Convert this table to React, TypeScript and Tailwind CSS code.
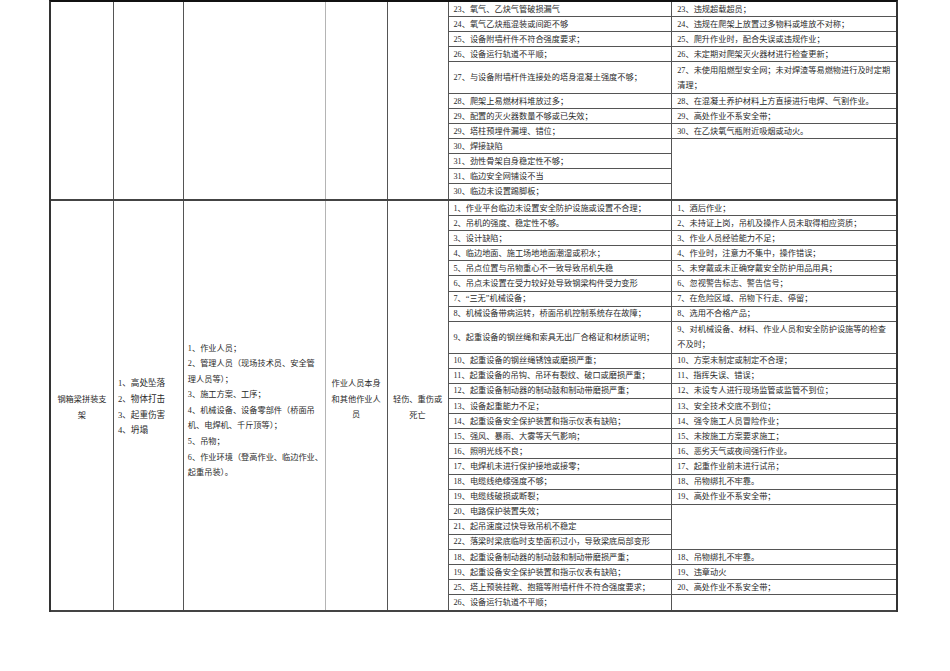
import React from "react";

type Row = [string, number];

const topH: Record<number, string> = {
  1: "h-[15px]",
  2: "h-[32px]",
  4: "h-[60px]",
};

const mainH: Record<number, string> = {
  1: "h-[15.1px]",
  2: "h-[32px]",
  3: "h-[45.3px]",
};

const topLeft: Row[] = [
  ["23、氧气、乙炔气管破损漏气", 1],
  ["24、氧气乙炔瓶混装或间距不够", 1],
  ["25、设备附墙杆件不符合强度要求；", 1],
  ["26、设备运行轨道不平顺；", 1],
  ["27、与设备附墙杆件连接处的塔身混凝土强度不够；", 2],
  ["28、爬架上易燃材料堆放过多；", 1],
  ["29、配置的灭火器数量不够或已失效；", 1],
  ["29、塔柱预埋件漏埋、错位；", 1],
  ["30、焊接缺陷", 1],
  ["31、劲性骨架自身稳定性不够；", 1],
  ["31、临边安全网铺设不当", 1],
  ["30、临边未设置踢脚板；", 1],
];

const topRight: Row[] = [
  ["23、违规超载超员；", 1],
  ["24、违规在爬架上放置过多物料或堆放不对称；", 1],
  ["25、爬升作业时，配合失误或违规作业；", 1],
  ["26、未定期对爬架灭火器材进行检查更新；", 1],
  ["27、未使用阻燃型安全网；未对焊渣等易燃物进行及时定期\n清理；", 2],
  ["28、在混凝土养护材料上方直接进行电焊、气割作业。", 1],
  ["29、高处作业不系安全带；", 1],
  ["30、在乙炔氧气瓶附近吸烟或动火。", 1],
  ["", 4],
];

const mainLeft: Row[] = [
  ["1、作业平台临边未设置安全防护设施或设置不合理；", 1],
  ["2、吊机的强度、稳定性不够。", 1],
  ["3、设计缺陷；", 1],
  ["4、临边地面、施工场地地面潮湿或积水；", 1],
  ["5、吊点位置与吊物重心不一致导致吊机失稳", 1],
  ["6、吊点未设置在受力较好处导致钢梁构件受力变形", 1],
  ["7、“三无”机械设备；", 1],
  ["8、机械设备带病运转，桥面吊机控制系统存在故障；", 1],
  ["9、起重设备的钢丝绳和索具无出厂合格证和材质证明；", 2],
  ["10、起重设备的钢丝绳锈蚀或磨损严重；", 1],
  ["11、起重设备的吊钩、吊环有裂纹、破口或磨损严重；", 1],
  ["12、起重设备制动器的制动鼓和制动带磨损严重；", 1],
  ["13、设备起重能力不足；", 1],
  ["14、起重设备安全保护装置和指示仪表有缺陷；", 1],
  ["15、强风、暴雨、大雾等天气影响；", 1],
  ["16、照明光线不良；", 1],
  ["17、电焊机未进行保护接地或接零；", 1],
  ["18、电缆线绝缘强度不够；", 1],
  ["19、电缆线破损或断裂；", 1],
  ["20、电路保护装置失效；", 1],
  ["21、起吊速度过快导致吊机不稳定", 1],
  ["22、落梁时梁底临时支垫面积过小，导致梁底局部变形", 1],
  ["18、起重设备制动器的制动鼓和制动带磨损严重；", 1],
  ["19、起重设备安全保护装置和指示仪表有缺陷；", 1],
  ["25、塔上预装挂靴、抱箍等附墙杆件不符合强度要求；", 1],
  ["26、设备运行轨道不平顺；", 1],
];

const mainRight: Row[] = [
  ["1、酒后作业；", 1],
  ["2、未持证上岗，吊机及操作人员未取得相应资质；", 1],
  ["3、作业人员经验能力不足；", 1],
  ["4、作业时，注意力不集中，操作错误；", 1],
  ["5、未穿戴或未正确穿戴安全防护用品用具；", 1],
  ["6、忽视警告标志、警告信号；", 1],
  ["7、在危险区域、吊物下行走、停留；", 1],
  ["8、选用不合格产品；", 1],
  ["9、对机械设备、材料、作业人员和安全防护设施等的检查\n不及时；", 2],
  ["10、方案未制定或制定不合理；", 1],
  ["11、指挥失误、错误；", 1],
  ["12、未设专人进行现场监管或监管不到位；", 1],
  ["13、安全技术交底不到位；", 1],
  ["14、强令施工人员冒险作业；", 1],
  ["15、未按施工方案要求施工；", 1],
  ["16、恶劣天气或夜间强行作业。", 1],
  ["17、起重作业前未进行试吊；", 1],
  ["18、吊物绑扎不牢靠。", 1],
  ["19、高处作业不系安全带；", 1],
  ["", 3],
  ["18、吊物绑扎不牢靠。", 1],
  ["19、违章动火", 1],
  ["20、高处作业不系安全带；", 1],
  ["", 1],
];

function ItemColumn({ rows, heights, last }: { rows: Row[]; heights: Record<number, string>; last?: boolean }) {
  return (
    <div
      className={
        last
          ? "w-[224px] flex flex-col"
          : "w-[224px] flex flex-col border-r border-[#555]"
      }
    >
      {rows.map(([text, units], i) => (
        <div
          key={i}
          className={`${heights[units]} flex items-center px-[5px] leading-[15px] whitespace-pre border-b border-[#555] last:border-b-0`}
        >
          {text}
        </div>
      ))}
    </div>
  );
}

function Block({
  left,
  right,
  heights,
  children,
}: {
  left: Row[];
  right: Row[];
  heights: Record<number, string>;
  children?: React.ReactNode;
}) {
  return (
    <div className="flex border-b-2 border-[#444]">
      {children ?? (
        <>
          <div className="w-[63px] border-r border-[#555]" />
          <div className="w-[70px] border-r border-[#555]" />
          <div className="w-[142px] border-r border-[#b4b4b4]" />
          <div className="w-[62px] border-r border-[#555]" />
          <div className="w-[61px] border-r border-[#555]" />
        </>
      )}
      <ItemColumn rows={left} heights={heights} />
      <ItemColumn rows={right} heights={heights} last />
    </div>
  );
}

export default function App() {
  return (
    <div
      className="w-[950px] h-[671px] bg-white text-[#2a2a2a] text-[8.2px] overflow-hidden"
      style={{ fontFamily: '"Liberation Serif", "Noto Sans CJK SC", serif' }}
    >
      <div className="ml-[49px] w-[849px] border-t-2 border-l-2 border-r-2 border-[#333] border-t-[#111]">
        <Block left={topLeft} right={topRight} heights={topH} />
        <Block left={mainLeft} right={mainRight} heights={mainH}>
          <div className="w-[63px] border-r border-[#555] flex items-center justify-center text-center leading-[15.5px] pt-[4px]">
            钢箱梁拼装支
            <br />
            架
          </div>
          <div className="w-[70px] border-r border-[#555] flex items-center pl-[4px] leading-[15.8px] text-[8.6px] pt-[4px]">
            <div>
              1、高处坠落
              <br />
              2、物体打击
              <br />
              3、起重伤害
              <br />
              4、坍塌
            </div>
          </div>
          <div className="w-[142px] border-r border-[#b4b4b4] flex items-center pl-[4px] leading-[15.6px] whitespace-nowrap pt-[10px]">
            <div>
              1、作业人员；
              <br />
              2、管理人员（现场技术员、安全管
              <br />
              理人员等）；
              <br />
              3、施工方案、工序；
              <br />
              4、机械设备、设备零部件（桥面吊
              <br />
              机、电焊机、千斤顶等）；
              <br />
              5、吊物；
              <br />
              6、作业环境（登高作业、临边作业、
              <br />
              起重吊装）。
            </div>
          </div>
          <div className="w-[62px] border-r border-[#555] flex items-center justify-center text-center leading-[15.5px] pb-[12px]">
            作业人员本身
            <br />
            和其他作业人
            <br />员
          </div>
          <div className="w-[61px] border-r border-[#555] flex items-center justify-center text-center leading-[15.5px] pt-[4px]">
            轻伤、重伤或
            <br />
            死亡
          </div>
        </Block>
      </div>
    </div>
  );
}
